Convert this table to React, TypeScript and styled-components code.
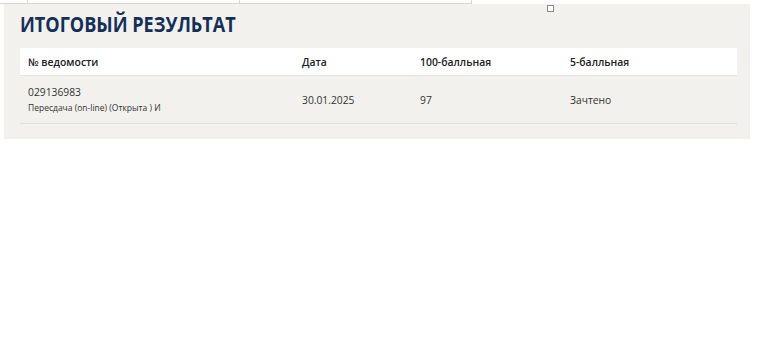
import React from "react";
import styled, { createGlobalStyle } from "styled-components";

const Global = createGlobalStyle`
  html, body { margin: 0; padding: 0; background: #fff; }
  body { font-family: "Open Sans", "Noto Sans", sans-serif; color: #333; }
`;

const Page = styled.div`
  position: relative;
  width: 760px;
`;

const TopStrip = styled.div`
  display: flex;
  width: 472px;
  height: 3px;
  border-bottom: 1px solid #d6d6d6;
`;

const StripCell = styled.div<{ $w: number }>`
  width: ${(p) => p.$w}px;
  border-right: 1px solid #d6d6d6;
  box-sizing: border-box;
`;

const Handle = styled.div`
  position: absolute;
  left: 547px;
  top: 5px;
  width: 5px;
  height: 5px;
  border: 1px solid #8a8a8a;
  background: #fff;
`;

const Panel = styled.section`
  margin-left: 4px;
  width: 746px;
  box-sizing: border-box;
  background: #f2f1ee;
  padding: 5px 13px 15px 16px;
`;

const Title = styled.h2`
  margin: 0 0 9px 0;
  font-size: 21px;
  line-height: 30px;
  font-weight: 700;
  color: #142f5a;
  white-space: nowrap;
  transform: scaleX(0.86);
  transform-origin: left center;
`;

const Table = styled.div`
  display: grid;
  grid-template-columns: 274px 118px 150px 175px;
`;

const HeadCell = styled.div`
  background: #fff;
  height: 27px;
  display: flex;
  align-items: center;
  padding-left: 8px;
  font-size: 10.4px;
  font-weight: 600;
  color: #222;
  border-bottom: 1px solid #e6e4e0;
`;

const BodyCell = styled.div`
  height: 47px;
  display: flex;
  flex-direction: column;
  justify-content: center;
  padding-left: 8px;
  font-size: 10.3px;
  color: #333;
  border-bottom: 1px solid #e2e0dc;
`;

const Number = styled.div`
  font-size: 10.3px;
  line-height: 16px;
`;

const Sub = styled.div`
  font-size: 8.5px;
  line-height: 15px;
`;

export default function App() {
  return (
    <Page>
      <Global />
      <TopStrip>
        <StripCell $w={28} />
        <StripCell $w={212} />
        <StripCell $w={232} />
      </TopStrip>
      <Handle />
      <Panel>
        <Title>ИТОГОВЫЙ РЕЗУЛЬТАТ</Title>
        <Table>
          <HeadCell>№ ведомости</HeadCell>
          <HeadCell>Дата</HeadCell>
          <HeadCell>100-балльная</HeadCell>
          <HeadCell>5-балльная</HeadCell>
          <BodyCell>
            <Number>029136983</Number>
            <Sub>Пересдача (on-line) (Открыта ) И</Sub>
          </BodyCell>
          <BodyCell>30.01.2025</BodyCell>
          <BodyCell>97</BodyCell>
          <BodyCell>Зачтено</BodyCell>
        </Table>
      </Panel>
    </Page>
  );
}
